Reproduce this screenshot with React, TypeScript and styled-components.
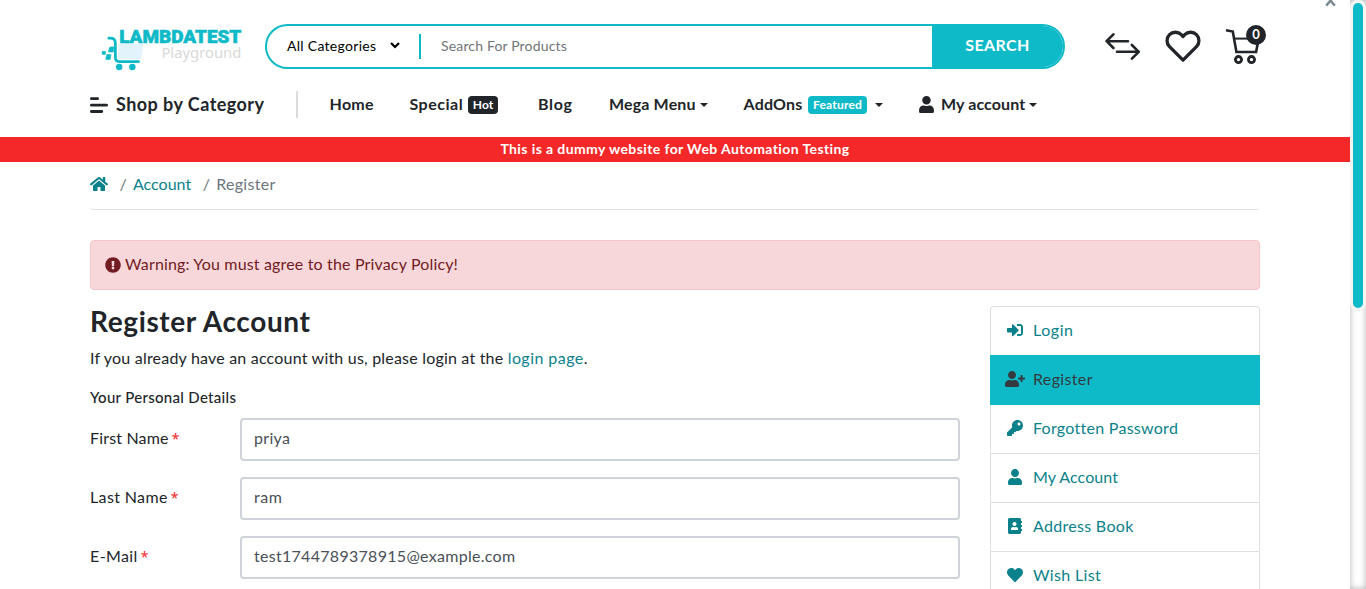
import React from 'react';
import styled, { createGlobalStyle, css } from 'styled-components';
import {
  FaAddressBook,
  FaExclamationCircle,
  FaHeart,
  FaHome,
  FaKey,
  FaSignInAlt,
  FaUser,
  FaUserPlus,
} from 'react-icons/fa';

const teal = '#0fbac8';
const link = '#0b828b';
const ink = '#212529';

const GlobalStyle = createGlobalStyle`
  *, *::before, *::after { box-sizing: border-box; }
  body {
    margin: 0;
    background: #fff;
    color: ${ink};
    font: 400 16px/24px Lato, "Liberation Sans", sans-serif;
    overflow: hidden;
  }
`;

const Frame = styled.div`
  display: flex;
  height: 589px;
  overflow: hidden;
`;

const Page = styled.div`
  position: relative;
  flex: 1;
  min-width: 0;
  overflow: hidden;
`;

const Container = styled.div`
  width: 1170px;
  margin-left: 90px;
`;

/* Tracks a run of text by a small amount. */
const Text = styled.span<{ $track?: number }>`
  letter-spacing: ${(p) => p.$track ?? 0}px;
  white-space: nowrap;
`;

/* ---------- header ---------- */

const HeaderRow = styled(Container)`
  display: flex;
  align-items: flex-start;
  height: 91px;
  padding-top: 24px;
`;

const LogoBox = styled.a`
  flex: none;
  width: 175px;
  padding-left: 10px;
  svg { display: block; }
`;

const SearchBar = styled.div`
  display: flex;
  flex: none;
  align-items: stretch;
  width: 800px;
  height: 45px;
  border: 2px solid ${teal};
  border-radius: 23px;
  overflow: hidden;
  font-size: 14px;
`;

const CategorySelect = styled.div`
  display: flex;
  align-items: center;
  width: 152px;
  padding: 0 19px 2px 20px;
  justify-content: space-between;
  color: #000;
`;

const Divider = styled.div`
  width: 2px;
  height: 25px;
  margin-top: 8px;
  background: ${teal};
`;

const SearchField = styled.div`
  display: flex;
  align-items: center;
  flex: 1;
  padding: 0 20px 2px;
  color: #707579;
`;

const SearchButton = styled.div`
  display: flex;
  align-items: center;
  justify-content: center;
  width: 131px;
  padding-bottom: 3px;
  background: ${teal};
  color: #fff;
  font-size: 16px;
  font-weight: 700;
`;

const HeaderIcons = styled.div`
  display: flex;
  flex: none;
  margin-left: 40px;
  svg { display: block; }
`;

const IconLink = styled.a<{ $width: number }>`
  position: relative;
  width: ${(p) => p.$width}px;
`;

const CartCount = styled.span`
  position: absolute;
  top: 1px;
  left: 21px;
  width: 20px;
  height: 20px;
  border-radius: 50%;
  background: ${ink};
  color: #fff;
  font-size: 13px;
  font-weight: 700;
  line-height: 19px;
  text-align: center;
`;

/* ---------- navigation ---------- */

const Nav = styled(Container)`
  display: grid;
  grid-template-columns: 206px 33.5px 80px 128.5px 71px 134.5px 175.5px auto;
  align-items: center;
  height: 27px;
  margin-bottom: 19px;
  font-weight: 700;
`;

const ShopBy = styled.a`
  display: flex;
  align-items: center;
  gap: 8px;
  padding-bottom: 1px;
  font-size: 18px;
`;

const NavRule = styled.span`
  width: 2px;
  height: 27px;
  background: #dcdcdc;
`;

const NavItem = styled.a`
  display: flex;
  align-items: center;
  height: 24px;
`;

const NavText = styled(Text)`
  padding-bottom: 1px;
`;

const Caret = styled.i<{ $gap: number }>`
  width: 0;
  margin-left: ${(p) => p.$gap}px;
  border: 4px solid transparent;
  border-top-color: ${ink};
  border-bottom: 0;
`;

const Badge = styled.span<{ $width: number; $accent?: boolean }>`
  width: ${(p) => p.$width}px;
  height: 18px;
  margin-left: auto;
  border-radius: 4px;
  color: #fff;
  font-size: 12px;
  font-weight: 700;
  line-height: 17px;
  text-align: center;
  background: ${(p) => (p.$accent ? teal : ink)};
`;

const Labelled = styled.span<{ $width: number }>`
  display: flex;
  align-items: center;
  width: ${(p) => p.$width}px;
`;

const UserIcon = styled(FaUser)`
  width: 15px;
  height: 17px;
  margin-right: 7px;
`;

const Banner = styled.div`
  height: 25px;
  background: #f42828;
  color: #fff;
  font-size: 14px;
  font-weight: 700;
  line-height: 24px;
  text-align: center;
`;

/* ---------- breadcrumb and alert ---------- */

const Breadcrumb = styled(Container)`
  display: flex;
  align-items: center;
  height: 48px;
  margin-bottom: 30px;
  padding-bottom: 2px;
  border-bottom: 1px solid #dee2e6;
  border-radius: 4px;
  color: #6c757d;
`;

const Crumb = styled.span<{ $link?: boolean }>`
  display: flex;
  padding-bottom: 1px;
  color: ${(p) => (p.$link ? link : 'inherit')};
`;

const Slash = styled.span`
  width: 13.5px;
  margin-left: 11.5px;
  padding-bottom: 1px;
`;

const Alert = styled(Container)`
  display: flex;
  align-items: center;
  gap: 4px;
  height: 50px;
  margin-bottom: 16px;
  padding: 0 15px 1px 14px;
  border: 1px solid #f5c6cb;
  border-radius: 4px;
  background: #f8d7da;
  color: #721c24;
  span { padding-bottom: 1px; }
`;

/* ---------- form ---------- */

const Columns = styled(Container)`
  display: flex;
  gap: 30px;
`;

const Main = styled.main`
  width: 870px;
`;

const Title = styled.h1`
  margin: 0 0 9px;
  font-size: 28px;
  font-weight: 700;
  line-height: 31px;
`;

const Lead = styled.p`
  margin: 0 0 16px;
  a { color: ${link}; }
`;

const Legend = styled.h2`
  margin: 0 0 10px;
  font-family: "Lato Medium", Lato, sans-serif;
  font-size: 15px;
  font-weight: 500;
  line-height: 22px;
`;

const Field = styled.label`
  display: flex;
  align-items: center;
  height: 43px;
  margin-bottom: 16px;
`;

const FieldName = styled.span`
  width: 150px;
  padding-bottom: 3px;
`;

const Required = styled.span`
  margin-left: 3px;
  color: #f42828;
  font-family: "Noto Sans", sans-serif;
  font-size: 14px;
  line-height: 16px;
`;

const FieldValue = styled.span`
  display: flex;
  align-items: center;
  flex: 1;
  height: 43px;
  padding: 0 12px 3px;
  border: 2px solid #ced4da;
  border-radius: 4px;
  color: #495057;
`;

/* ---------- side list ---------- */

const Side = styled.aside`
  width: 270px;
  border: solid #dedfe0;
  border-width: 1px 1px 0;
  border-radius: 4px 4px 0 0;
`;

const SideItem = styled.a<{ $active?: boolean }>`
  display: flex;
  align-items: center;
  height: 49px;
  padding-left: 14px;
  padding-bottom: 2px;
  border-bottom: 1px solid #dedfe0;
  color: ${link};
  ${(p) =>
    p.$active &&
    css`
      height: 50px;
      margin: -1px -1px 0;
      padding-left: 15px;
      padding-bottom: 1px;
      border-bottom-color: ${teal};
      background: ${teal};
      color: #343a40;
    `}
`;

const SideIcon = styled.span`
  display: flex;
  justify-content: center;
  width: 20px;
  margin-right: 8px;
  svg { flex: none; }
`;

/* ---------- window edges ---------- */

const CloseMark = styled.svg`
  position: absolute;
  top: 0;
  left: 1325px;
`;

const ScrollTrack = styled.div`
  width: 16px;
  height: 589px;
  padding: 3px 3px 0;
  background: #fff;
  box-shadow: inset 0 0 6px rgba(0, 0, 0, 0.3);
`;

const ScrollThumb = styled.div`
  width: 10px;
  height: 305px;
  border-radius: 5px;
  background: ${teal};
  box-shadow: 0 0 0 3px #f5f5f5;
`;

const Logo = () => (
  <svg width="144" height="48" viewBox="100 24 144 48">
    <path d="M118.5 43.5h24.8l-2.2 15.5h-23z" fill="#e3f3fc" />
    <path
      d="M108.8 38.2h1.7q4.6 0 4.8 4.4l.1 15q0 4 3.8 4h19.4"
      fill="none"
      stroke={teal}
      strokeWidth="2.8"
      strokeLinecap="round"
    />
    <g fill={teal}>
      <path d="M110.2 47h3.8l-.8 5h-4.6l.6-4z" stroke={teal} strokeWidth=".6" strokeLinejoin="round" />
      <rect x="101.8" y="51" width="4" height="3.8" rx="1" />
      <path d="M106.6 54.6h4.4l-.8 4.8h-4.4z" stroke={teal} strokeWidth=".6" strokeLinejoin="round" />
      <circle cx="119.2" cy="67" r="3.2" />
      <circle cx="132.4" cy="67" r="3.2" />
    </g>
    <text x="119.2" y="42.8" fill={teal} stroke={teal} strokeWidth=".6" fontFamily="Roboto" fontWeight="900" fontSize="19" textLength="122" lengthAdjust="spacingAndGlyphs">
      LAMBDATEST
    </text>
    <text x="161.4" y="58.4" fill="#d9d9d9" fontFamily="Noto Sans" fontSize="15" textLength="80" lengthAdjust="spacingAndGlyphs">
      Playground
    </text>
  </svg>
);

const SwapIcon = () => (
  <svg width="36" height="40" viewBox="1105 24 36 40" fill="none" stroke={ink} strokeWidth="2.6" strokeLinecap="round" strokeLinejoin="round">
    <path d="M1128 41.2h-21.3M1113.4 34.4l-6.8 6.8 6.8 6.8M1117 51.8h21.8M1131.9 45l6.8 6.8-6.8 6.8" />
  </svg>
);

const HeartIcon = () => (
  <svg width="36" height="40" viewBox="1164.5 24 36 40" fill="none" stroke={ink} strokeWidth="3.3" strokeLinejoin="round">
    <path d="M1182.5 60.2 1169 46.7a8.6 8.6 0 0 1 0-12 8.3 8.3 0 0 1 11.8 0l1.7 1.8 1.7-1.8a8.3 8.3 0 0 1 11.8 0 8.6 8.6 0 0 1 0 12z" />
  </svg>
);

const CartIcon = () => (
  <svg width="40" height="42" viewBox="1225 24 40 42" fill="none" stroke={ink} strokeWidth="2.6">
    <path d="M1226 30.3l6.8 1.2 3.6 20.5h19.7l2.6-13.6" />
    <path d="M1234 38.6h25" strokeWidth="2" />
    <circle cx="1238.5" cy="59.6" r="3.1" strokeWidth="2.8" />
    <circle cx="1251.5" cy="59.6" r="3.1" strokeWidth="2.8" />
  </svg>
);

const fields = [
  { name: 'First Name', track: 0.17, value: 'priya', valueTrack: 0.3 },
  { name: 'Last Name', track: 0.37, value: 'ram', valueTrack: 0.5 },
  { name: 'E-Mail', track: 0.4, value: 'test1744789378915@example.com', valueTrack: 0.29 },
];

const sideLinks = [
  { label: 'Login', track: 0.55, icon: <FaSignInAlt size={16} /> },
  { label: 'Register', track: 0.35, icon: <FaUserPlus size={20} />, active: true },
  { label: 'Forgotten Password', track: 0.27, icon: <FaKey size={16} /> },
  { label: 'My Account', track: 0.08, icon: <FaUser size={16} /> },
  { label: 'Address Book', track: 0.3, icon: <FaAddressBook size={16} /> },
  { label: 'Wish List', track: 0.35, icon: <FaHeart size={16} /> },
];

export default function App() {
  return (
    <Frame>
      <GlobalStyle />
      <Page>
        <CloseMark width="11" height="7" viewBox="0 0 11 7" fill="none" stroke="#7b8a92" strokeWidth="2.4">
          <path d="M1.2 5.6 7.2 -1.4M9.8 5.6 3.8 -1.4" />
        </CloseMark>

        <HeaderRow>
          <LogoBox><Logo /></LogoBox>
          <SearchBar>
            <CategorySelect>
              <Text $track={0.29}>All Categories</Text>
              <svg width="10" height="7" viewBox="0 0 10 7" fill="none" stroke="#000" strokeWidth="2.2">
                <path d="M1 1l4 4 4-4" />
              </svg>
            </CategorySelect>
            <Divider />
            <SearchField><Text $track={0.16}>Search For Products</Text></SearchField>
            <SearchButton><Text $track={0.4}>SEARCH</Text></SearchButton>
          </SearchBar>
          <HeaderIcons>
            <IconLink $width={59.5}><SwapIcon /></IconLink>
            <IconLink $width={60.5}><HeartIcon /></IconLink>
            <IconLink $width={40}><CartIcon /><CartCount>0</CartCount></IconLink>
          </HeaderIcons>
        </HeaderRow>

        <Nav>
          <ShopBy>
            <svg width="18" height="17" viewBox="0 0 18 17" fill="none" stroke={ink} strokeWidth="2.8" strokeLinecap="round">
              <path d="M1.4 2.7h6.2M1.4 9.2h15.2M1.4 15.5h10.4" />
            </svg>
            <Text $track={0.45}>Shop by Category</Text>
          </ShopBy>
          <NavRule />
          <NavItem><NavText $track={0.3}>Home</NavText></NavItem>
          <NavItem>
            <Labelled $width={88.5}>
              <NavText $track={0.5}>Special</NavText>
              <Badge $width={30}>Hot</Badge>
            </Labelled>
          </NavItem>
          <NavItem><NavText $track={0.65}>Blog</NavText></NavItem>
          <NavItem><NavText $track={0.15}>Mega Menu</NavText><Caret $gap={4} /></NavItem>
          <NavItem>
            <Labelled $width={123.5}>
              <NavText $track={0.2}>AddOns</NavText>
              <Badge $width={59} $accent><Text $track={0.2}>Featured</Text></Badge>
            </Labelled>
            <Caret $gap={8} />
          </NavItem>
          <NavItem><UserIcon /><NavText $track={0.1}>My account</NavText><Caret $gap={4} /></NavItem>
        </Nav>

        <Banner><Text $track={0.4}>This is a dummy website for Web Automation Testing</Text></Banner>

        <Breadcrumb>
          <Crumb $link><FaHome size={18} /></Crumb>
          <Slash>/</Slash>
          <Crumb $link><Text>Account</Text></Crumb>
          <Slash>/</Slash>
          <Crumb><Text $track={0.3}>Register</Text></Crumb>
        </Breadcrumb>

        <Alert>
          <FaExclamationCircle size={16} />
          <Text $track={0.16}>Warning: You must agree to the Privacy Policy!</Text>
        </Alert>

        <Columns>
          <Main>
            <Title><Text $track={0.62}>Register Account</Text></Title>
            <Lead>
              <Text $track={0.2}>If you already have an account with us, please login at the </Text>
              <a><Text $track={0.45}>login page</Text></a>.
            </Lead>
            <Legend><Text $track={0.3}>Your Personal Details</Text></Legend>
            {fields.map((f) => (
              <Field key={f.name}>
                <FieldName>
                  <Text $track={f.track}>{f.name}</Text>
                  <Required>*</Required>
                </FieldName>
                <FieldValue><Text $track={f.valueTrack}>{f.value}</Text></FieldValue>
              </Field>
            ))}
          </Main>
          <Side>
            {sideLinks.map((s) => (
              <SideItem key={s.label} $active={s.active}>
                <SideIcon>{s.icon}</SideIcon>
                <Text $track={s.track}>{s.label}</Text>
              </SideItem>
            ))}
          </Side>
        </Columns>
      </Page>
      <ScrollTrack><ScrollThumb /></ScrollTrack>
    </Frame>
  );
}
